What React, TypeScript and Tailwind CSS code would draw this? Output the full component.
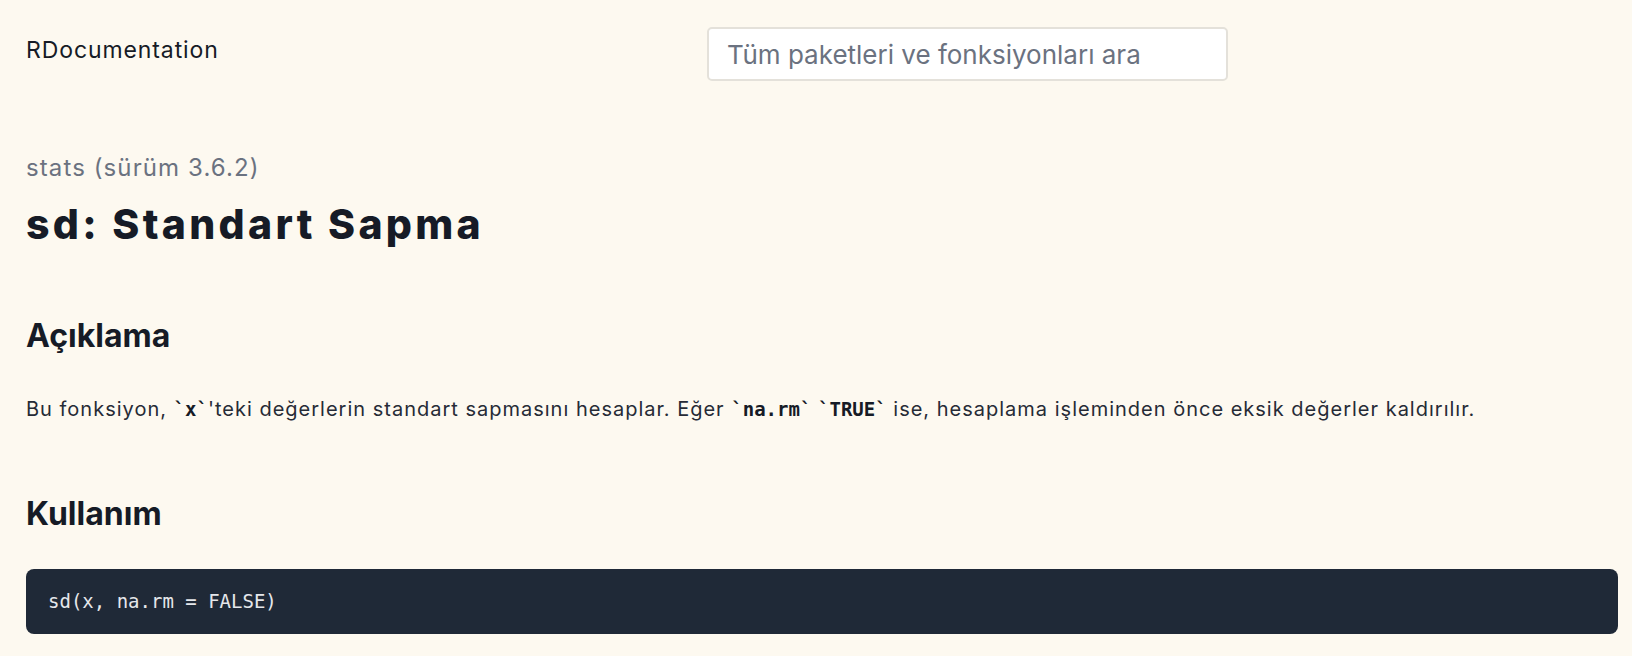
import React from "react";

const sans = "font-['Inter','Noto_Sans',sans-serif]";

function Code({ children }: { children: React.ReactNode }) {
  return (
    <code className="font-['DejaVu_Sans_Mono','Liberation_Mono',monospace] font-bold text-[19px] tracking-normal text-[#161b26]">
      `{children}`
    </code>
  );
}

export default function App() {
  return (
    <div className={`min-h-[656px] w-full bg-[#fdf9f0] ${sans} text-[#161b26]`}>
      <div className="pl-[26px] pr-[14px]">
        <header className="flex items-start pt-[27px]">
          <div className="w-[681px] shrink-0 pt-[8px] text-[23px] leading-[30px] tracking-[0.9px] text-[#161b26]">
            RDocumentation
          </div>
          <div className="flex h-[54px] w-[521px] items-center rounded-[5px] border-2 border-[#e4e1da] bg-white px-[18px] text-[26px] text-[#6b7280]">
            Tüm paketleri ve fonksiyonları ara
          </div>
        </header>

        <div className="mt-[71px] text-[24px] leading-[32px] tracking-[1.1px] text-[#6b7280]">stats (sürüm 3.6.2)</div>
        <h1 className="mt-[15px] text-[41px] font-extrabold leading-[50px] tracking-[3.3px]">sd: Standart Sapma</h1>

        <h2 className="mt-[67px] text-[32px] font-bold leading-[40px]">Açıklama</h2>
        <p className="mt-[39px] text-[20px] leading-[28px] tracking-[1px] text-[#262b36]">
          Bu fonksiyon, <Code>x</Code>'teki değerlerin standart sapmasını hesaplar. Eğer <Code>na.rm</Code>{" "}
          <Code>TRUE</Code> ise, hesaplama işleminden önce eksik değerler kaldırılır.
        </p>

        <h2 className="mt-[71px] text-[32px] font-bold leading-[40px]">Kullanım</h2>
        <div className="mt-[35px] flex h-[65px] items-center rounded-[8px] bg-[#1f2937] px-[22px]">
          <span className="font-['DejaVu_Sans_Mono','Liberation_Mono',monospace] text-[19px] text-[#e5e7eb]">
            sd(x, na.rm = FALSE)
          </span>
        </div>
      </div>
    </div>
  );
}
